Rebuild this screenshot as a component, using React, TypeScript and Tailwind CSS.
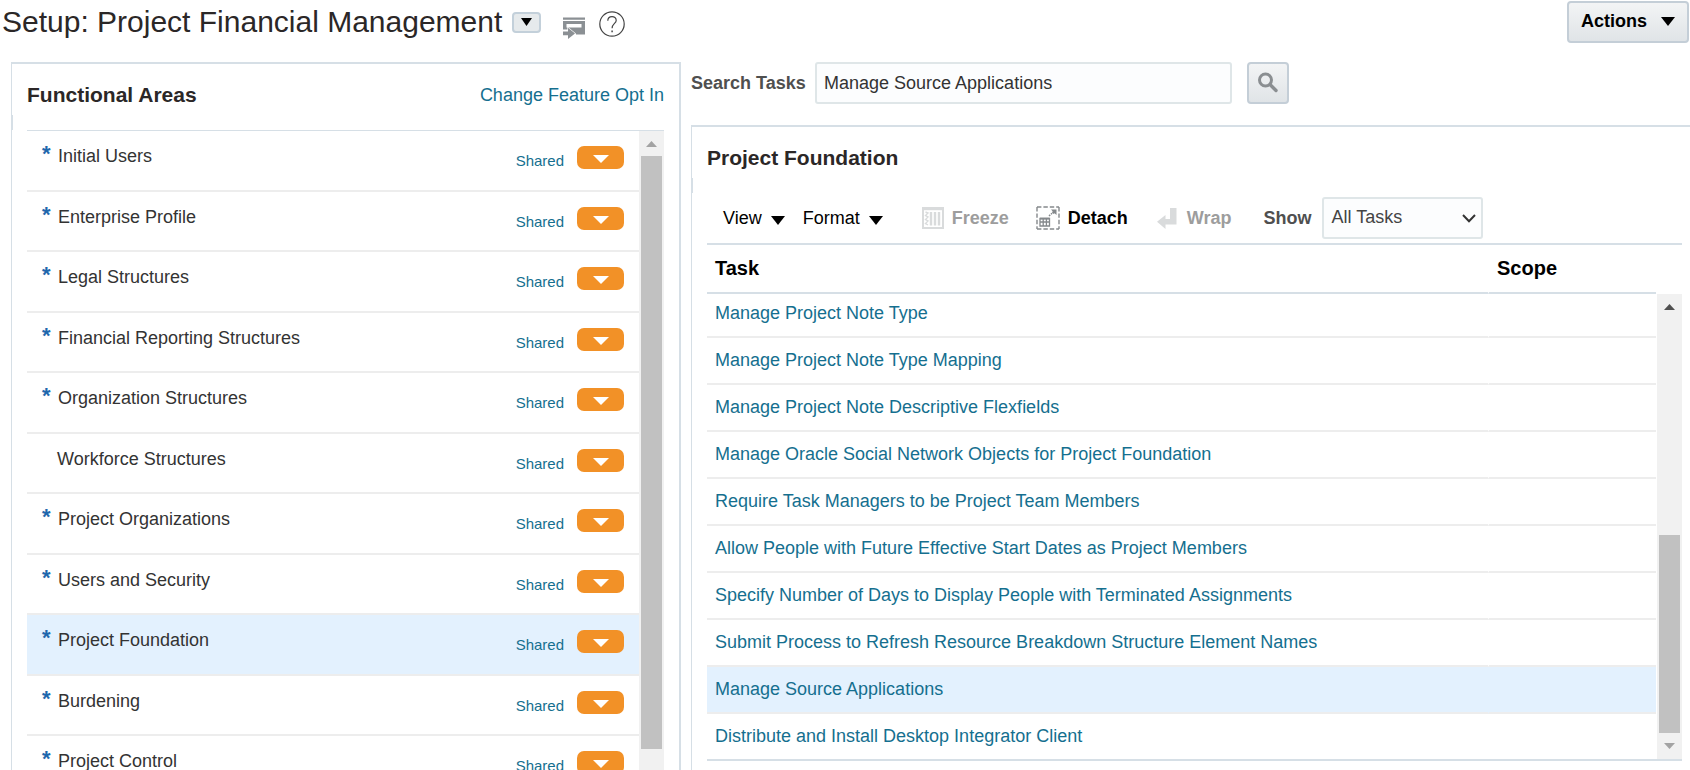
import React from "react";

const areas = [
  { name: "Initial Users", required: true },
  { name: "Enterprise Profile", required: true },
  { name: "Legal Structures", required: true },
  { name: "Financial Reporting Structures", required: true },
  { name: "Organization Structures", required: true },
  { name: "Workforce Structures", required: false },
  { name: "Project Organizations", required: true },
  { name: "Users and Security", required: true },
  { name: "Project Foundation", required: true, selected: true },
  { name: "Burdening", required: true },
  { name: "Project Control", required: true },
];

const tasks = [
  { name: "Manage Project Note Type" },
  { name: "Manage Project Note Type Mapping" },
  { name: "Manage Project Note Descriptive Flexfields" },
  { name: "Manage Oracle Social Network Objects for Project Foundation" },
  { name: "Require Task Managers to be Project Team Members" },
  { name: "Allow People with Future Effective Start Dates as Project Members" },
  { name: "Specify Number of Days to Display People with Terminated Assignments" },
  { name: "Submit Process to Refresh Resource Breakdown Structure Element Names" },
  { name: "Manage Source Applications", selected: true },
  { name: "Distribute and Install Desktop Integrator Client" },
];

function Triangle({ className, up = false }: { className: string; up?: boolean }) {
  return (
    <svg viewBox="0 0 14 9" preserveAspectRatio="none" className={className} fill="currentColor" aria-hidden="true">
      <path d={up ? "M0 9H14L7 0Z" : "M0 0H14L7 9Z"} />
    </svg>
  );
}

function ShareIcon() {
  return (
    <svg width="22" height="22" viewBox="0 0 22 22" aria-hidden="true">
      <path fill="#8b9094" d="M0 0.5H22V2.8H0ZM0 4H22V17.5H0Z" />
      <path fill="#fff" d="M3.5 7H18.5V10.5H3.5ZM0 12.5H5L13 17L13 18H0Z" />
      <path
        fill="#8b9094"
        stroke="#fff"
        strokeWidth="1.2"
        paintOrder="stroke"
        d="M0 14.5H5V10.8L12 16.4L5 22V18.3H0Z"
      />
    </svg>
  );
}

function HelpIcon() {
  return (
    <svg width="26" height="26" viewBox="0 0 26 26" fill="none" stroke="#444" aria-hidden="true">
      <circle cx="13" cy="13" r="12.2" strokeWidth="1.2" />
      <path strokeWidth="1.2" d="M8.8 9.8C8.8 4.2 17.3 4.4 17.2 9.4C17.1 12.4 13.2 12.6 13.1 17.2" />
      <path strokeWidth="1.5" d="M13.1 19.5V21.2" />
    </svg>
  );
}

function FreezeIcon() {
  return (
    <svg width="22" height="22" viewBox="0 0 22 22" fill="none" stroke="#d9dbdc" aria-hidden="true">
      <path strokeWidth="2" d="M1 1H21V21H1Z" />
      <path strokeWidth="2.4" d="M1 2H21" />
      <path strokeWidth="2.4" d="M9 5V18.5M13 5V18.5M17 5V18.5" />
      <path strokeWidth="1.4" d="M3.5 5L6 6L3.5 8.5L6 10L3.5 12.5L6 14L3.5 16.5L6 18" />
    </svg>
  );
}

function DetachIcon() {
  return (
    <svg width="24" height="24" viewBox="0 0 24 24" fill="none" stroke="#85898c" aria-hidden="true">
      <path strokeWidth="1.4" strokeDasharray="4.4 2" d="M1 1H23M1 23H23M1 1V23M23 1V23" />
      <path strokeWidth="1.3" d="M4 12.5H13.5V20H4ZM4 16H13.5M7.2 12.5V20M10.4 12.5V20" />
      <path strokeWidth="1.8" d="M4 12.6H13.5" />
      <path strokeWidth="1.5" strokeDasharray="1.6 1" d="M13 10L18 5.5" />
      <path fill="#85898c" stroke="none" d="M15 3.5H20.5V9L18.6 7.2L17.6 8L16 6.4L16.8 5.4Z" />
    </svg>
  );
}

function WrapIcon() {
  return (
    <svg width="20" height="22" viewBox="0 0 20 22" aria-hidden="true">
      <path fill="#d9dbdc" d="M13 1H19.5V17.5H8.5V22L0 14.8L8.5 8V12H13Z" />
    </svg>
  );
}

function SearchIcon() {
  return (
    <svg width="22" height="22" viewBox="0 0 22 22" fill="none" stroke="#8a8e91" aria-hidden="true">
      <circle cx="8.5" cy="8" r="6" strokeWidth="3" />
      <path strokeWidth="3.4" strokeLinecap="round" d="M13.5 13L19 18.5" />
    </svg>
  );
}

export default function App() {
  return (
    <div className="flex h-screen flex-col overflow-hidden bg-white font-['Liberation_Sans',Arial,sans-serif] text-lg leading-6 text-[#333]">
      <header className="flex h-[62px] shrink-0 items-start justify-between pl-[2px] pr-px pt-px">
        <div className="flex h-[42px] items-center">
          <h1 className="text-[30px] leading-9 text-[#2b2727]">Setup: Project Financial Management</h1>
          <button
            type="button"
            aria-label="Select setup area"
            className="ml-2.5 flex h-[21px] w-[29px] items-center justify-center rounded-[4px] border-2 border-[#c3d0da] bg-[#e6eaec] text-black"
          >
            <Triangle className="h-2 w-[11px]" />
          </button>
          <button type="button" aria-label="Share" className="ml-[22px] mt-3">
            <ShareIcon />
          </button>
          <button type="button" aria-label="Help" className="ml-3.5 mt-1">
            <HelpIcon />
          </button>
        </div>
        <button
          type="button"
          className="flex h-[42px] items-center gap-3.5 rounded-[4px] border-2 border-[#c4ced7] bg-linear-to-b from-[#f3f4f5] to-[#e0e4e7] px-3 pb-0.5 font-bold text-black"
        >
          Actions
          <Triangle className="h-[9px] w-3.5" />
        </button>
      </header>

      <div className="flex min-h-0 flex-1">
        <section className="relative ml-[11px] flex w-[670px] shrink-0 flex-col border-l border-r-2 border-t-2 border-[#d6dfe6] px-[15px]">
          <span className="absolute left-0 top-[51px] h-[15px] w-px bg-[#d6dfe6]" />
          <div className="flex h-[66px] shrink-0 items-center justify-between pb-1">
            <h2 className="text-[21px] font-bold text-[#2b2727]">Functional Areas</h2>
            <a href="#opt-in" className="text-[#156f8f]">
              Change Feature Opt In
            </a>
          </div>
          <div className="flex min-h-0 flex-1 border-t border-[#d6dfe6]">
            <ul className="min-w-0 flex-1 overflow-hidden">
              {areas.map((area) => (
                <li
                  key={area.name}
                  className={`flex items-start border-b-2 border-[#ededed] px-[15px] odd:h-[61px] even:h-[60px] ${
                    area.selected ? "bg-[#e3f1fe]" : ""
                  }`}
                >
                  {area.required && (
                    <span className="w-4 pt-[11px] text-[22px] font-bold leading-6 text-[#1f67ad]">*</span>
                  )}
                  <span className={`flex-1 pt-[13px] ${area.required ? "" : "pl-[15px]"}`}>{area.name}</span>
                  <a href="#shared" className="pt-[18px] text-[15px] text-[#156f8f]">
                    Shared
                  </a>
                  <button
                    type="button"
                    aria-label={`Actions for ${area.name}`}
                    className="ml-[13px] mt-[15px] flex h-[23px] w-[47px] items-center justify-center rounded-[7px] bg-[#f29127] text-white"
                  >
                    <Triangle className="mt-[3px] h-2 w-4" />
                  </button>
                </li>
              ))}
            </ul>
            <div className="flex w-[25px] flex-col items-center bg-[#f1f1f1] text-[#a3a3a3]">
              <Triangle up className="mb-[9px] mt-2.5 h-1.5 w-[11px] shrink-0" />
              <div className="mb-[21px] w-[21px] flex-1 bg-[#c1c1c1]" />
            </div>
          </div>
        </section>

        <main className="flex min-w-0 flex-1 flex-col pl-2.5">
          <div className="mb-[21px] flex h-[42px] shrink-0 items-center">
            <label htmlFor="search-tasks" className="w-[124px] font-bold text-[#4f4f4f]">
              Search Tasks
            </label>
            <input
              id="search-tasks"
              type="text"
              defaultValue="Manage Source Applications"
              className="h-[42px] w-[417px] rounded-[3px] border-2 border-[#dfe6e8] bg-[#fcfdfe] px-[7px]"
            />
            <button
              type="button"
              aria-label="Search"
              className="ml-[15px] flex h-[42px] w-[42px] items-center justify-center rounded-[4px] border-2 border-[#c4ced7] bg-linear-to-b from-[#f3f4f5] to-[#e0e4e7]"
            >
              <SearchIcon />
            </button>
          </div>

          <section className="relative flex min-h-0 flex-1 flex-col border-l border-t-2 border-[#d6dfe6] pl-[15px] pr-2">
            <span className="absolute left-0 top-[51px] h-[15px] w-px bg-[#d6dfe6]" />
            <h2 className="pt-[19px] text-[21px] font-bold text-[#2b2727]">Project Foundation</h2>
            <div className="mt-[27px] flex h-[48px] shrink-0 items-start border-b-2 border-[#d6dfe6] pl-4 text-black">
              <div className="flex h-[42px] items-center">
                <button type="button" className="flex items-center gap-[9px]">
                  View
                  <Triangle className="mt-1 h-[9px] w-3.5" />
                </button>
                <button type="button" className="ml-[18px] flex items-center gap-[9px]">
                  Format
                  <Triangle className="mt-1 h-[9px] w-3.5" />
                </button>
                <button type="button" disabled className="ml-[39px] flex items-center gap-2 font-bold text-[#9d9d9d]">
                  <FreezeIcon />
                  Freeze
                </button>
                <button type="button" className="ml-[27px] flex items-center gap-2 font-bold">
                  <DetachIcon />
                  Detach
                </button>
                <button type="button" disabled className="ml-[29px] flex items-center gap-2.5 font-bold text-[#9d9d9d]">
                  <WrapIcon />
                  Wrap
                </button>
                <label htmlFor="show" className="ml-8 mr-[11px] font-bold text-[#4f4f4f]">
                  Show
                </label>
                <div className="relative">
                  <select
                    id="show"
                    defaultValue="All Tasks"
                    className="h-[42px] w-[161px] appearance-none rounded-[3px] border-2 border-[#dfe6e8] bg-[#fcfdfe] pb-0.5 pl-[7px] pr-8 text-[#444]"
                  >
                    <option>All Tasks</option>
                  </select>
                  <svg
                    width="14"
                    height="9"
                    viewBox="0 0 14 9"
                    fill="none"
                    stroke="#333"
                    strokeWidth="2"
                    className="pointer-events-none absolute right-[7px] top-[17px]"
                    aria-hidden="true"
                  >
                    <path d="M1 1L7 7.2L13 1" />
                  </svg>
                </div>
              </div>
            </div>

            <div className="flex border-b-2 border-[#d6dfe6]">
              <table className="min-w-0 flex-1 table-fixed border-separate border-spacing-0 text-left">
                <thead>
                  <tr className="h-[49px] text-xl text-black">
                    <th className="border-b-2 border-r border-b-[#d6dfe6] border-r-white px-2 pb-0.5 font-bold">Task</th>
                    <th className="w-[167px] border-b-2 border-[#d6dfe6] px-2 pb-0.5 font-bold">Scope</th>
                  </tr>
                </thead>
                <tbody>
                  {tasks.map((task) => (
                    <tr
                      key={task.name}
                      className={`group h-[47px] first:h-[44px] last:h-[45px] ${task.selected ? "bg-[#e3f1fe]" : ""}`}
                    >
                      <td
                        className={`border-b-2 border-r border-b-[#ededed] px-2 pb-0.5 pt-0 group-first:pb-1 group-last:border-b-0 ${
                          task.selected ? "border-r-[#e3f1fe]" : "border-r-white"
                        }`}
                      >
                        <a href="#task" className="text-[#156f8f]">
                          {task.name}
                        </a>
                      </td>
                      <td className="border-b-2 border-[#ededed] group-last:border-b-0" />
                    </tr>
                  ))}
                </tbody>
              </table>
              <div className="ml-px mt-[49px] flex w-[25px] flex-col items-center bg-[#f1f1f1]">
                <Triangle up className="mt-2.5 h-1.5 w-[11px] shrink-0 text-[#505050]" />
                <div className="mt-[225px] w-[21px] flex-1 bg-[#c1c1c1]" />
                <Triangle className="my-2.5 h-1.5 w-[11px] shrink-0 text-[#a3a3a3]" />
              </div>
            </div>
          </section>
        </main>
      </div>
    </div>
  );
}
